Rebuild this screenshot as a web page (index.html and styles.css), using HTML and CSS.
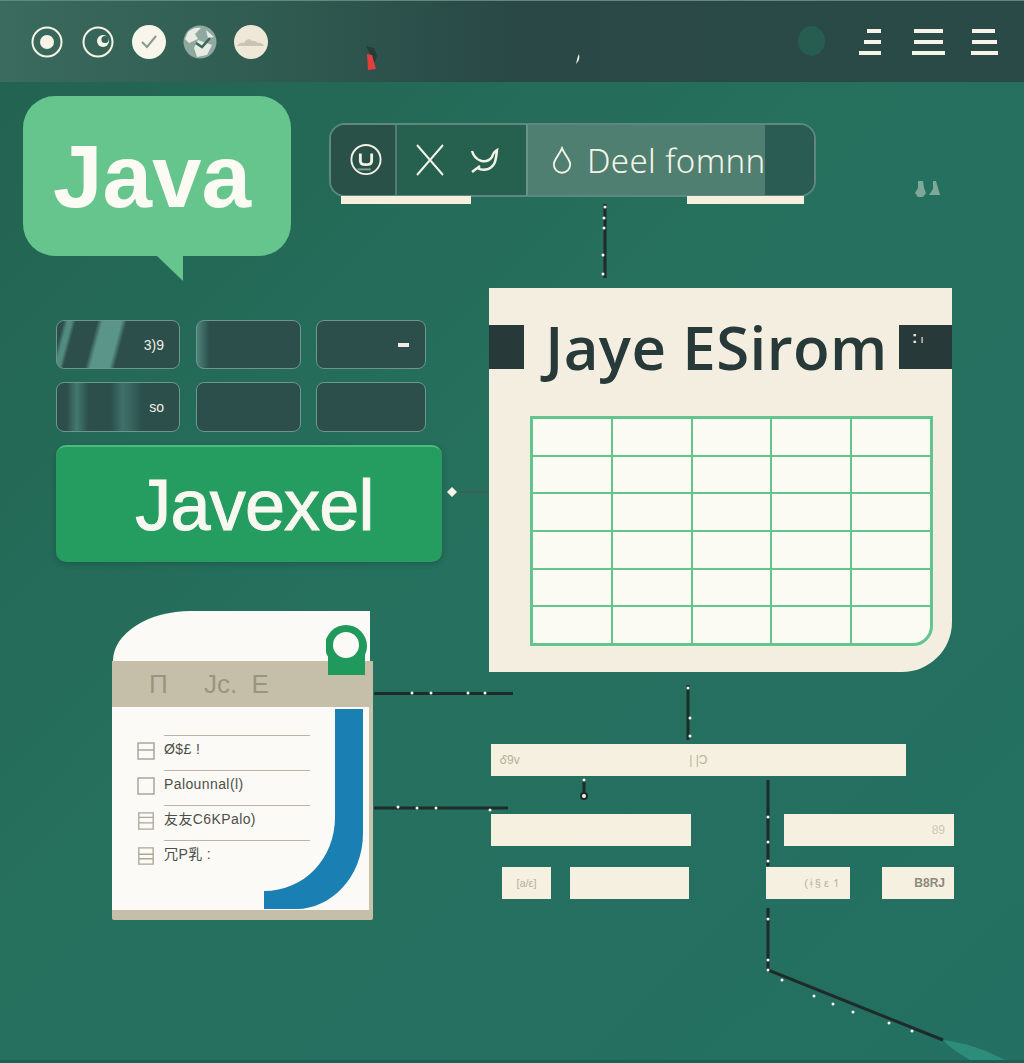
FILE: index.html
```html
<!DOCTYPE html>
<html lang="en">
<head>
  <meta charset="UTF-8" />
  <meta name="viewport" content="width=device-width, initial-scale=1.0"/>
  <title>Java Excel</title>
  <link rel="stylesheet" href="styles.css">
</head>
<body>
  <div class="canvas">
    <header class="topbar">
      <div class="top-icons">
        <svg class="top-icon" viewBox="0 0 34 34"><circle cx="17" cy="17" r="14.5" fill="none" stroke="#f7f3e6" stroke-width="2"/><circle cx="17" cy="17" r="7" fill="#f7f3e6"/></svg>
        <svg class="top-icon" viewBox="0 0 34 34"><circle cx="17" cy="17" r="14.5" fill="none" stroke="#f7f3e6" stroke-width="2"/><circle cx="22" cy="16" r="6" fill="#f7f3e6"/><circle cx="24" cy="14.5" r="3.6" fill="#2f6457"/></svg>
        <svg class="top-icon" viewBox="0 0 34 34"><circle cx="17" cy="17" r="17" fill="#f8f5ea"/><path d="M10 17l5 5 9-11" fill="none" stroke="#8a9a90" stroke-width="2"/></svg>
        <svg class="top-icon" viewBox="0 0 34 34"><circle cx="17" cy="17" r="16.5" fill="#8fa8a0"/><path d="M5 7c4-4 9-5 13-4l-6 6 3 5-9 4-4-4zM23 5l8 7-6 1zM15 15l14 5-5 10-10 2-3-9z" fill="#e8ebe2"/><path d="M13 18l6 4 8-9" fill="none" stroke="#3b665a" stroke-width="2.500"/></svg>
        <svg class="top-icon" viewBox="0 0 34 34"><circle cx="17" cy="17" r="17" fill="#efe8d8"/><path d="M3 21c2-3 5-4 7-3 2-4 6-5 8-2 2-1 5 1 6 2 3-1 5 1 6 3z" fill="#c9c3b4"/></svg>
      </div>
      <span class="top-glow"></span>
      <div class="top-menus">
        <svg class="menu-a" viewBox="0 0 22 26"><path d="M8 0h14v4H8zM5 11h17v4H5zM0 22h22v4H0z" fill="#f7f3e6"/></svg>
        <svg class="menu-b" viewBox="0 0 33 26"><path d="M2 0h29v4H2zM2 11h29v4H2zM0 22h33v4H0z" fill="#f7f3e6"/></svg>
        <svg class="menu-c" viewBox="0 0 27 26"><path d="M1 0h23v4H1zM1 11h25v4H1zM0 22h27v4H0z" fill="#f7f3e6"/></svg>
      </div>
    </header>

    <!-- connectors go under the cards -->
    <svg class="wires" viewBox="0 0 1024 1063">
      <path class="sliver" d="M943 1040c25 3 45 11 62 20l-35 0c-10-6-20-12-27-20z"/>
      <path class="wire" d="M605 204V278M374 693.500H513M374 808H508M688 685V740M584 780V796M768 780V866M768 908V970L943 1040"/>
      <path class="wire-thin" d="M458 492H506"/>
      <circle class="wire-end" cx="584" cy="796" r="3"/>
      <path class="dots" d="M605 207v0M604 218v0M604 228v0M603 255v0M603 274v0M412 693v0M431 693v0M468 693v0M485 693v0M398 807v0M417 808v0M436 808v0M490 810v0M688 688v0M690 718v0M690 736v0M584 780v0M768 817v0M768 842v0M768 861v0M768 919v0M768 960v0M768 970v0M782 980v0M814 996v0M833 1004v0M853 1012v0M889 1023v0M912 1031v0"/>
      <path class="diamond" d="M452 487l5 5-5 5-5-5z"/>
      <path class="mark-dark" d="M366 46l8 2 3 8-3 8-3-8z"/>
      <path class="mark-red" d="M367 54l5 1 4 14-8 1z"/>
      <path class="mark-white" d="M579 54c1 4 0 7-3 10 1-3 1-7 3-10z"/>
      <path class="mark-bottle" d="M918 181h5l1 7 2 5-3 4h-5l-3-4 3-5zM933 181h3l4 14h-11l4-6z"/>
    </svg>

    <div class="bubble"><span>Java</span></div>

    <div class="toolbar">
      <div class="seg seg-icon">
        <svg class="tool-u" viewBox="0 0 34 34"><circle cx="17" cy="16.500" r="15.500" fill="none" stroke="#f4f2e6" stroke-width="2"/><path d="M11 10v8c0 3 2 4 6 4s6-1 6-4v-8" fill="none" stroke="#f4f2e6" stroke-width="3"/><path d="M8 27h14" stroke="#7fa298" stroke-width="2"/></svg>
      </div>
      <div class="seg seg-tools">
        <svg class="tool-x" viewBox="0 0 30 34"><path d="M2 2l26 30M28 2L2 32" fill="none" stroke="#f4f2e6" stroke-width="2"/></svg>
        <svg class="tool-s" viewBox="0 0 30 30"><path d="M2 6c3 10 14 14 20 6 1-3 3-6 5-7-1 8-1 16-9 19-3 1-7 1-11-1M2 27l8-6" fill="none" stroke="#f4f2e6" stroke-width="2.500"/></svg>
      </div>
      <div class="seg seg-label">
        <svg class="tool-drop" viewBox="0 0 22 30"><path d="M11 2c-3 8-9 12-9 18a9 9 0 0 0 18 0c0-6-6-10-9-18z" fill="none" stroke="#f4f2e6" stroke-width="2"/></svg>
        <span>Deel fomnn</span>
      </div>
      <div class="seg seg-end"></div>
      <i class="under under-left"></i>
      <i class="under under-right"></i>
    </div>

    <div class="cells">
      <div class="cell cell-glare-a">3)9</div>
      <div class="cell cell-glare-b"></div>
      <div class="cell"><i class="cell-dash"></i></div>
      <div class="cell cell-glare-c">so</div>
      <div class="cell"></div>
      <div class="cell"></div>
    </div>

    <div class="excel-btn">Javexel</div>

    <section class="sheet">
      <div class="sheet-head">
        <i class="head-block"></i>
        <h2>Jaye ESirom</h2>
        <i class="head-block head-block-end">:&thinsp;<b>ı</b></i>
      </div>
      <div class="grid">
        <span></span><span></span><span></span><span></span><span></span>
        <span></span><span></span><span></span><span></span><span></span>
        <span></span><span></span><span></span><span></span><span></span>
        <span></span><span></span><span></span><span></span><span></span>
        <span></span><span></span><span></span><span></span><span></span>
        <span></span><span></span><span></span><span></span><span></span>
      </div>
    </section>

    <section class="note">
      <div class="note-top"></div>
      <div class="note-head">&#928;&nbsp;&nbsp;&nbsp;&nbsp;&nbsp;Jc.&nbsp;&nbsp;E</div>
      <div class="note-body">
        <ul class="note-list">
          <li><svg viewBox="0 0 18 18"><path d="M1 1h16v16H1zM1 8h16"/></svg><span>Ø$£ !</span></li>
          <li><svg viewBox="0 0 18 18"><path d="M1 1h16v16H1z"/></svg><span>Palounnal(l)</span></li>
          <li><svg viewBox="0 0 18 20"><path d="M1 1h16v18H1zM1 6h16M1 12h16"/></svg><span>友友C6KPalo)</span></li>
          <li><svg viewBox="0 0 18 20"><path d="M1 1h16v18H1zM1 8h16M1 13h16"/></svg><span>冗P乳 :</span></li>
        </ul>
      </div>
      <svg class="note-blue" viewBox="0 0 100 201"><path d="M71 0H99V124C99 170 65 200 33 200H0V182C40 182 71 150 71 108z"/></svg>
      <div class="note-foot"></div>
      <svg class="note-pin" viewBox="0 0 42 50"><circle cx="20" cy="21" r="21" fill="#1f9a5c"/><path d="M2 24h37v26H2z" fill="#1f9a5c"/><circle cx="20" cy="20" r="13" fill="#fbfaf6"/></svg>
    </section>

    <div class="bar bar-wide"><span>Ꮄ9v</span><span>| |Ͻ</span><span></span></div>
    <div class="bars bars-left">
      <div class="bar bar-mid"></div>
      <div class="bars-row">
        <div class="bar bar-tiny">[a/ε]</div>
        <div class="bar bar-small"></div>
      </div>
    </div>
    <div class="bars bars-right">
      <div class="bar bar-side">89</div>
      <div class="bars-row bars-row-split">
        <div class="bar bar-code">(ᚼ§ ε ↿</div>
        <div class="bar bar-code bar-code-dark">B8RJ</div>
      </div>
    </div>
    <div class="bottom-edge"></div>
  </div>
</body>
</html>
```

FILE: styles.css
```css
body {
  margin: 0;
  font-family: "Liberation Sans", "Noto Sans CJK SC", sans-serif;
}

.canvas {
  position: relative;
  width: 1024px;
  height: 1063px;
  overflow: hidden;
  background: linear-gradient(135deg, #22624f 0%, #26705e 45%, #236f61 100%);
}

/* top bar */
.topbar {
  display: flex;
  align-items: center;
  justify-content: space-between;
  height: 82px;
  padding: 0 26px 0 30px;
  box-sizing: border-box;
  background: linear-gradient(90deg, #3a6b5d 0%, #305c51 25%, #294846 50%, #2a4a47 100%);
  border-top: 1px solid #5d8a7c;
  position: relative;
}

.top-icons {
  display: flex;
  align-items: center;
  gap: 17px;
}

.top-icon {
  width: 34px;
  height: 34px;
}

.top-glow {
  position: absolute;
  left: 798px;
  top: 25px;
  width: 27px;
  height: 30px;
  border-radius: 50%;
  background: #275c50;
}

.top-menus {
  display: flex;
  align-items: center;
  gap: 31px;
}

.menu-a {
  width: 22px;
  height: 26px;
}

.menu-b {
  width: 33px;
  height: 26px;
  margin-right: -5px;
}

.menu-c {
  width: 27px;
  height: 26px;
}

/* connectors */
.wires {
  position: absolute;
  left: 0;
  top: 0;
  width: 1024px;
  height: 1063px;
}

.wire {
  fill: none;
  stroke: #1f2b2a;
  stroke-width: 3;
}

.wire-thin {
  fill: none;
  stroke: #3d5f56;
  stroke-width: 2;
}

.wire-end {
  fill: #f7f3e6;
  stroke: #1f2b2a;
  stroke-width: 2;
}

.dots {
  fill: none;
  stroke: #fbfaf0;
  stroke-width: 3;
  stroke-linecap: round;
}

.sliver {
  fill: #2d8c7a;
}

.diamond {
  fill: #f7f3e6;
}

.mark-red {
  fill: #e2403c;
}

.mark-dark {
  fill: #263d3a;
}

.mark-white {
  fill: #eef0e6;
}

.mark-bottle {
  fill: #7fa89b;
}

/* speech bubble */
.bubble {
  position: absolute;
  left: 23px;
  top: 96px;
  width: 268px;
  height: 160px;
  box-sizing: border-box;
  padding-right: 10px;
  display: flex;
  align-items: center;
  justify-content: center;
  border-radius: 32px;
  background: #65c58c;
  color: #fbfaf3;
  font-size: 89px;
  font-weight: bold;
}

.bubble::after {
  content: "";
  position: absolute;
  left: 134px;
  top: 160px;
  width: 26px;
  height: 25px;
  background: #65c58c;
  clip-path: polygon(0 0, 100% 0, 100% 100%);
}

/* toolbar */
.toolbar {
  position: absolute;
  left: 329px;
  top: 123px;
  width: 487px;
  height: 74px;
  box-sizing: border-box;
  display: flex;
  border: 2px solid #5c8a7e;
  border-radius: 16px;
  background: #2b5c53;
}

.seg {
  display: flex;
  align-items: center;
  box-sizing: border-box;
}

.seg-icon {
  width: 66px;
  padding-left: 5px;
  justify-content: center;
  background: #2a5148;
  border-right: 2px solid #4f7e72;
  border-radius: 14px 0 0 14px;
}

.tool-u {
  width: 32px;
  height: 32px;
}

.seg-tools {
  width: 129px;
  padding-left: 18px;
  gap: 25px;
  background: #26614f;
}

.tool-x {
  width: 30px;
  height: 34px;
}

.tool-s {
  width: 30px;
  height: 30px;
}

.seg-label {
  width: 239px;
  padding-left: 24px;
  gap: 15px;
  background: #4f7f70;
  border-left: 2px solid #6b9588;
  color: #f6f4e8;
  font-family: "Noto Sans", sans-serif;
  font-size: 33px;
  font-weight: 300;
  letter-spacing: 0.4px;
  white-space: nowrap;
}

.tool-drop {
  width: 20px;
  height: 28px;
  flex: none;
}

.seg-end {
  flex: 1;
  background: #2b5c53;
  border-radius: 0 14px 14px 0;
}

.under {
  position: absolute;
  top: 71px;
  height: 8px;
  background: #f6efdd;
}

.under-left {
  left: 10px;
  width: 130px;
}

.under-right {
  left: 356px;
  width: 117px;
}

/* small cells */
.cells {
  position: absolute;
  left: 56px;
  top: 320px;
  display: grid;
  grid-template-columns: 124px 105px 110px;
  grid-template-rows: 49px 50px;
  column-gap: 15.500px;
  row-gap: 13px;
}

.cell {
  display: flex;
  align-items: center;
  justify-content: flex-end;
  padding-right: 15px;
  border: 1.500px solid #6d978c;
  border-radius: 8px;
  background: #2c4f4b;
  color: #f0eee2;
  font-size: 14px;
}

.cell-glare-a {
  background: linear-gradient(105deg, #2c4f4b 5%, #538b7f 8%, #538b7f 11%, #2c4f4b 14%, #2c4f4b 30%, #5b9488 34%, #5b9488 48%, #2c4f4b 52%);
}

.cell-glare-b {
  background: linear-gradient(90deg, #4d8479 0%, #2c4f4b 12%);
}

.cell-glare-c {
  background: linear-gradient(90deg, #2c4f4b 8%, #43796e 16%, #2c4f4b 26%, #2c4f4b 44%, #40706a 54%, #2c4f4b 70%);
}

.cell-dash {
  width: 11px;
  height: 4px;
  margin-right: 1px;
  background: #f0eee2;
}

/* green button */
.excel-btn {
  position: absolute;
  left: 56px;
  top: 445px;
  width: 386px;
  height: 117px;
  padding-left: 11px;
  display: flex;
  align-items: center;
  justify-content: center;
  border-top: 2px solid #4dbb80;
  box-sizing: border-box;
  border-radius: 10px;
  background: #259c60;
  box-shadow: 0 2px 6px rgba(0, 0, 0, 0.18);
  color: #f9f8f0;
  font-size: 72px;
  letter-spacing: -0.8px;
  -webkit-text-stroke: 1px #f9f8f0;
}

/* main sheet */
.sheet {
  position: absolute;
  left: 489px;
  top: 288px;
  width: 463px;
  height: 384px;
  border-radius: 0 0 50px 0;
  background: #f3eee0;
}

.sheet-head {
  display: flex;
  align-items: center;
  justify-content: space-between;
  height: 44px;
  margin-top: 37px;
}

.sheet-head h2 {
  margin: 0 0 0 10px;
  font-family: "Open Sans", sans-serif;
  font-size: 60px;
  font-weight: 600;
  color: #28393a;
  letter-spacing: 0.4px;
  line-height: 44px;
  white-space: nowrap;
}

.head-block {
  width: 35px;
  height: 44px;
  background: #28393a;
}

.head-block-end {
  width: 53px;
  box-sizing: border-box;
  padding: 4px 0 0 13px;
  color: #f3eee0;
  font-size: 16px;
  font-style: normal;
  font-weight: bold;
}

.head-block-end b {
  font-size: 11px;
  font-weight: normal;
}

.grid {
  display: grid;
  grid-template-columns: repeat(5, 1fr);
  grid-template-rows: repeat(6, 1fr);
  gap: 2px;
  width: 403px;
  height: 230px;
  box-sizing: border-box;
  margin: 47px 0 0 41px;
  border: 3px solid #62c58d;
  border-radius: 0 0 20px 0;
  background: #62c58d;
  overflow: hidden;
}

.grid span {
  background: #fbfaf3;
}

/* note card */
.note {
  position: absolute;
  left: 112px;
  top: 611px;
  width: 261px;
  height: 309px;
  display: flex;
  flex-direction: column;
}

.note-top {
  height: 50px;
  margin-left: 1px;
  margin-right: 3px;
  border-radius: 78px 0 0 0 / 50px 0 0 0;
  background: #fbfaf6;
}

.note-head {
  height: 46px;
  padding-left: 37px;
  background: #c5bfa9;
  color: #98957f;
  font-size: 26px;
  line-height: 46px;
  white-space: nowrap;
}

.note-body {
  flex: 1;
  padding: 28px 0 0 26px;
  background: #fbfaf6;
  border-right: 4px solid #c9c3ae;
}

.note-list {
  list-style: none;
  margin: 0;
  padding: 0;
  width: 172px;
}

.note-list li {
  position: relative;
  box-sizing: border-box;
  height: 35px;
  margin-left: 26px;
  border-top: 1px solid #b8b6a6;
  color: #4d4f47;
  font-size: 14px;
  line-height: 27px;
  letter-spacing: 0.4px;
}

.note-list svg {
  position: absolute;
  left: -27px;
  top: 6px;
  width: 18px;
  height: 18px;
  fill: none;
  stroke: #a9a899;
  stroke-width: 1.500;
}

.note-blue {
  position: absolute;
  left: 152px;
  top: 98px;
  width: 100px;
  height: 201px;
}

.note-blue path {
  fill: #1a7fb2;
}

.note-foot {
  height: 10px;
  background: #c5bfa9;
  border-radius: 0 0 2px 2px;
}

.note-pin {
  position: absolute;
  left: 214px;
  top: 14px;
  width: 42px;
  height: 50px;
}

/* lower bars */
.bar {
  height: 32px;
  display: flex;
  align-items: center;
  box-sizing: border-box;
  background: #f5f0df;
  color: #b5b0a0;
  font-size: 12px;
}

.bar-wide {
  position: absolute;
  left: 491px;
  top: 744px;
  width: 415px;
  justify-content: space-between;
  padding: 0 15px 0 9px;
}

.bar-wide span:nth-child(2) {
  margin-left: -14px;
}

.bars {
  position: absolute;
  top: 814px;
  display: flex;
  flex-direction: column;
  gap: 21px;
}

.bars-left {
  left: 491px;
  width: 200px;
}

.bars-right {
  left: 766px;
  width: 188px;
  align-items: flex-end;
}

.bars-row {
  display: flex;
  gap: 19px;
  padding-left: 11px;
}

.bars-row-split {
  width: 188px;
  box-sizing: border-box;
  padding-left: 0;
  gap: 32px;
}

.bar-tiny {
  width: 49px;
  justify-content: center;
  font-size: 11px;
}

.bar-small {
  width: 119px;
}

.bar-side {
  width: 170px;
  justify-content: flex-end;
  padding-right: 9px;
  color: #cdc8b8;
}

.bar-code {
  width: 84px;
  justify-content: flex-end;
  padding-right: 9px;
  font-size: 11px;
}

.bar-code-dark {
  width: 72px;
  color: #8c8a7c;
  font-size: 12px;
  font-weight: bold;
}

.bottom-edge {
  position: absolute;
  left: 0;
  right: 0;
  bottom: 0;
  height: 3px;
  background: #1d5f50;
}
```
